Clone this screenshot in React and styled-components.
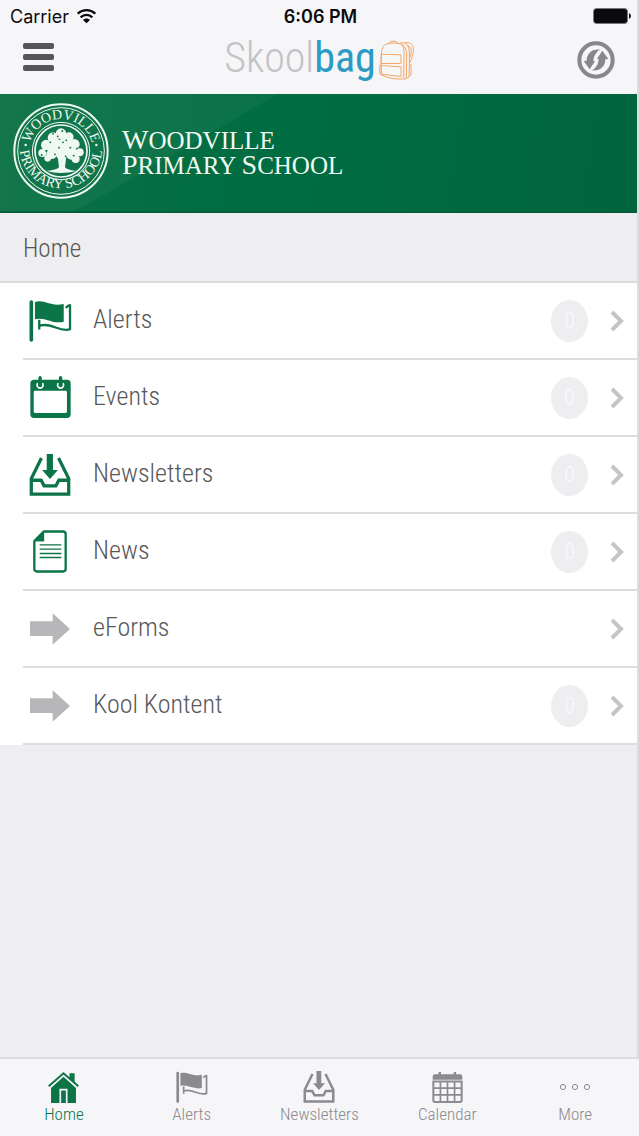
import React from "react";
import styled, { createGlobalStyle } from "styled-components";

const condensed = `"Roboto Condensed", "Liberation Sans Narrow", Roboto, sans-serif`;

const GlobalStyle = createGlobalStyle`
  *, *::before, *::after { box-sizing: border-box; }
  body { margin: 0; background: #eeedef; font-family: ${condensed}; font-weight: 300; }
  button { font: inherit; color: inherit; background: none; border: 0; padding: 0; cursor: pointer; }
  a { color: inherit; text-decoration: none; }
  h1, h2, p { margin: 0; font-weight: inherit; }
  ul { list-style: none; margin: 0; padding: 0; }
  svg { display: block; flex: none; }
`;

const Screen = styled.div`
  display: flex;
  flex-direction: column;
  min-height: 100vh;
  background: #f6f5f8;
`;

const Content = styled.div`
  flex: 1;
  display: flex;
  flex-direction: column;
  border-right: 2px solid #dddde0;
`;

const StatusBar = styled.div`
  display: grid;
  grid-template-columns: 1fr auto 1fr;
  align-items: center;
  height: 32px;
  padding: 0 6px 0 10px;
  font-family: Inter, sans-serif;
  font-size: 18px;
  font-weight: 400;
  color: #0b0b0d;
`;

const Carrier = styled.span`
  display: flex;
  align-items: center;
  gap: 8px;
`;

const Clock = styled.time`
  font-weight: 600;
`;

const Battery = styled.span`
  justify-self: end;
`;

const NavBar = styled.header`
  display: grid;
  grid-template-columns: 1fr auto 1fr;
  align-items: center;
  height: 62px;
  padding: 0 22px 6px 23px;
`;

const IconButton = styled.button`
  justify-self: ${(p) => p.$side};
`;

const MenuButton = styled(IconButton)`
  padding-bottom: 6px;
`;

const Brand = styled.div`
  display: flex;
  align-items: center;
  gap: 3px;
`;

const BrandName = styled.h1`
  font-size: 42px;
  line-height: 48px;
  padding-bottom: 4px;
  font-weight: 300;
  color: #c3c2c5;
`;

const BrandAccent = styled.span`
  font-weight: 400;
  color: #2a9cc4;
`;

const Banner = styled.section`
  display: flex;
  align-items: center;
  gap: 13px;
  height: 119px;
  padding: 0 13px 4px;
  border-bottom: 2px solid #005f39;
  background:
    linear-gradient(150deg, rgba(255, 255, 255, 0.04) 0 138px, transparent 140px),
    linear-gradient(100deg, #0a7144 0%, #006c41 45%, #00653f 100%);
`;

const SchoolName = styled.p`
  padding-top: 4px;
  font-family: "Liberation Serif", serif;
  font-size: 25px;
  line-height: 24px;
  font-weight: 400;
  color: #f1faf4;
`;

const NameLine = styled.span`
  display: block;
`;

const Initial = styled.span`
  font-size: 28px;
`;

const PageTitle = styled.h2`
  height: 70px;
  padding: 0 23px;
  border-bottom: 2px solid #dcdbdf;
  background: #eeedef;
  font-size: 25px;
  line-height: 72px;
  color: #58575a;
`;

const Menu = styled.ul`
  background: #fff;
`;

const MenuItem = styled.li`
  padding-left: 23px;
`;

const MenuLink = styled.a`
  display: flex;
  align-items: center;
  height: 77px;
  padding-right: 13px;
  border-bottom: 2px solid #dddce0;
`;

const MenuIcon = styled.span`
  display: flex;
  justify-content: center;
  width: 54px;
  margin-right: 16px;
  color: ${(p) => (p.$muted ? "#b7b6b8" : "#0b7548")};
`;

const MenuLabel = styled.span`
  flex: 1;
  padding-bottom: 4px;
  font-size: 26px;
  line-height: 32px;
  color: #58575a;
`;

const Badge = styled.span`
  width: 37px;
  height: 42px;
  margin-right: 22px;
  border-radius: 50%;
  background: #eeedef;
  font-size: 22px;
  line-height: 42px;
  text-align: center;
  color: #fbfafc;
`;

const Filler = styled.div`
  flex: 1;
  background: #eeedef;
`;

const TabBar = styled.nav`
  display: grid;
  grid-template-columns: repeat(5, 1fr);
  height: 79px;
  border-top: 2px solid #dddce0;
  background: #f6f5f8;
`;

const Tab = styled.a`
  display: flex;
  flex-direction: column;
  align-items: center;
  padding-top: 12px;
  font-size: 17px;
  line-height: 22px;
  color: ${(p) => (p.$active ? "#0b7548" : "#8b8a8d")};
`;

const TabIcon = styled.span`
  display: flex;
  align-items: center;
  height: 32px;
`;

const Flag = ({ size = 43 }) => (
  <svg width={size} height={size} viewBox="0 0 130 130" fill="none" stroke="currentColor">
    <path d="M7 9V124" strokeWidth="11" strokeLinecap="round" />
    <path d="M18 9C48 0 62 24 105 15V69C70 77 50 53 18 61Z" fill="currentColor" stroke="none" />
    <path d="M111 27Q120 18 124 19V91C95 103 65 68 31 81M31 63V92" strokeWidth="7" />
  </svg>
);

const EventsIcon = () => (
  <svg width="41" height="43" viewBox="0 0 122 128">
    <path
      fill="currentColor"
      fillRule="evenodd"
      d="M12 11H110Q121 11 121 22V114Q121 125 110 125H12Q1 125 1 114V22Q1 11 12 11ZM15 44Q11 44 11 48V106Q11 110 15 110H106Q110 110 110 106V48Q110 44 106 44Z"
    />
    <g fill="none" strokeLinecap="round">
      <path d="M22 23a9 9 0 1 0 16 0M83 23a9 9 0 1 0 16 0" stroke="#fff" strokeWidth="5" />
      <path d="M30 5V22M91 5V22" stroke="currentColor" strokeWidth="10" />
    </g>
  </svg>
);

const Inbox = ({ size = 42 }) => (
  <svg width={size} height={size} viewBox="0 0 126 128" fill="none" stroke="currentColor" strokeWidth="10">
    <path d="M37 12L6 75V122H120V75L89 12" />
    <path d="M6 80H36L45 97H81L90 80H120" />
    <path d="M53 0H72V49H87L63 76L39 49H53Z" fill="currentColor" stroke="none" />
  </svg>
);

const NewsIcon = () => (
  <svg width="34" height="43" viewBox="0 0 102 128" fill="none" stroke="currentColor">
    <path d="M32 4H90Q98 4 98 12V116Q98 124 90 124H12Q4 124 4 116V33Z" strokeWidth="7" strokeLinejoin="round" />
    <path d="M33 3V33H3Z" fill="currentColor" />
    <path d="M20 44H85M20 57H85M20 70H85M20 82H85" strokeWidth="4" />
  </svg>
);

const ArrowIcon = () => (
  <svg width="40" height="32" viewBox="0 0 120 94">
    <path d="M0 24H68V0L120 47L68 94V68H0Z" fill="currentColor" />
  </svg>
);

const Chevron = () => (
  <svg width="14" height="22" viewBox="0 0 14 22" fill="none" stroke="#c5c4c8" strokeWidth="4">
    <path d="M2 2L11 11L2 20" />
  </svg>
);

const HouseIcon = () => (
  <svg width="31" height="31" viewBox="0 0 90 92" fill="currentColor">
    <path d="M63 4H78V34L63 22Z" />
    <path d="M8 92V47L45 14L82 47V92H57V50H33V92Z" />
    <path d="M38 55H52V92H38Z" />
    <path d="M27 92V45H61V92" fill="none" stroke="currentColor" strokeWidth="5" />
    <path d="M5 47L45 10L85 47" fill="none" stroke="#f6f5f8" strokeWidth="4" />
    <path d="M1 42L45 4L89 42" fill="none" stroke="currentColor" strokeWidth="6" />
  </svg>
);

const CalendarIcon = () => (
  <svg width="31" height="31" viewBox="0 0 90 92" fill="none" stroke="currentColor">
    <path d="M1 23V14Q1 7 8 7H82Q89 7 89 14V23Z" fill="currentColor" stroke="none" />
    <path d="M22 0V12M67 0V12" strokeWidth="7" />
    <path d="M3 28H87V84Q87 89 82 89H8Q3 89 3 84Z" strokeWidth="6" />
    <path d="M24 28V88M45 28V88M66 28V88M3 48H87M3 68H87" strokeWidth="5" />
  </svg>
);

const MoreIcon = () => (
  <svg width="32" height="8" viewBox="0 0 32 8" fill="none" stroke="currentColor">
    <circle cx="4" cy="4" r="2.6" />
    <circle cx="16" cy="4" r="2.6" />
    <circle cx="28" cy="4" r="2.6" />
  </svg>
);

const WifiIcon = () => (
  <svg width="19" height="15" viewBox="0 0 57 45" fill="none" stroke="currentColor" strokeWidth="7">
    <path d="M2 14C18 0 39 0 55 14" />
    <path d="M11 25C21 15 36 15 46 25" />
    <path d="M28.5 43L18 33C24 27 33 27 39 33Z" fill="currentColor" stroke="none" />
  </svg>
);

const BatteryIcon = () => (
  <svg width="38" height="16" viewBox="0 0 38 16">
    <rect x="0.5" y="0.5" width="34" height="15" rx="3" fill="#0b0b0d" stroke="#77767a" />
    <path d="M36 5Q38 6 38 8T36 11Z" fill="#0b0b0d" />
  </svg>
);

const HamburgerIcon = () => (
  <svg width="31" height="30" viewBox="0 0 31 30" fill="#565558">
    <rect width="31" height="6" y="1" rx="2" />
    <rect width="31" height="6" y="12" rx="2" />
    <rect width="31" height="6" y="23" rx="2" />
  </svg>
);

const swirl = "M-37 3L-28 2C-28 -20 -11 -35 14 -31C3 -26 -7 -16 -8 3L-3 4L-19 28Z";

const RefreshIcon = () => (
  <svg width="38" height="38" viewBox="-57 -57 114 114" fill="#88878a">
    <circle r="50" fill="none" stroke="#88878a" strokeWidth="12" />
    <path d={swirl} />
    <path d={swirl} transform="rotate(180)" />
    <path d="M11 -29C-6 -18 9 12 -11 29" fill="none" stroke="#f6f5f8" strokeWidth="4" />
  </svg>
);

const BackpackIcon = () => (
  <svg width="35" height="41" viewBox="0 0 105 122" fill="none" stroke="#f3a868" strokeWidth="3" strokeLinejoin="round">
    <path d="M7 42Q7 16 24 11Q45 5 63 11Q76 15 75 40L74 116Q40 120 6 104Z" />
    <path d="M30 9Q35 1 44 3Q54 2 58 10" />
    <path d="M62 8Q84 6 89 20Q93 40 90 110L74 119" />
    <path d="M68 12Q82 20 83 42L82 114" />
    <path d="M78 8Q100 4 103 24Q105 42 92 68M84 17Q97 18 97 34Q97 44 91 54" />
    <path d="M7 42L66 44V70L6 70ZM7 76L66 80V109L7 102Z" />
    <path d="M6 72L1 76V98L6 103M90 70L96 74V104L90 110" />
  </svg>
);

const foliage = [
  [0, -26, 8], [-12, -20, 8], [12, -21, 7], [-22, -9, 8], [-9, -9, 10],
  [6, -9, 11], [20, -10, 8], [-28, 3, 6], [-14, 4, 8], [1, 4, 9],
  [16, 4, 9], [28, 2, 6], [-20, 11, 5], [22, 12, 6],
];

const gaps = [
  [-5, -22], [8, -16], [-16, -13], [-3, -5], [14, -5], [-22, 0], [24, -4],
  [-9, 5], [7, 8], [19, 7], [2, -30], [-29, 6], [-12, -26], [3, -13],
];

const Seal = () => (
  <svg width="96" height="96" viewBox="-72 -72 144 144" fill="none" stroke="#eff9f2" role="img" aria-label="School seal">
    <defs>
      <path id="sealTop" d="M-48 0A48 48 0 0 1 48 0" />
      <path id="sealBottom" d="M-62 -6A62 62 0 0 0 62 -6" />
    </defs>
    <circle r="70" strokeWidth="3" />
    <circle r="65" strokeWidth="1.5" />
    <circle r="43" strokeWidth="1.5" />
    <circle r="39" strokeWidth="2.5" />
    <g fill="#eff9f2" stroke="none">
      <g fontFamily="Liberation Serif, serif" fontSize="21" fontWeight="400" textAnchor="middle">
        <text><textPath href="#sealTop" startOffset="50%">WOODVILLE</textPath></text>
        <text><textPath href="#sealBottom" startOffset="50%">PRIMARY SCHOOL</textPath></text>
      </g>
      <circle cx="-53" cy="-9" r="1.8" />
      <circle cx="53" cy="-9" r="1.8" />
      {foliage.map(([x, y, r]) => <circle key={`${x},${y}`} cx={x} cy={y} r={r} />)}
      <path d="M-5 8L-3 24Q-4 28 -22 30Q0 36 23 30Q7 28 6 24L8 8Z" />
    </g>
    <g fill="#0d7546" stroke="none">
      {gaps.map(([x, y]) => <circle key={`${x},${y}`} cx={x} cy={y} r="1.4" />)}
    </g>
  </svg>
);

const items = [
  { label: "Alerts", icon: <Flag />, count: 0 },
  { label: "Events", icon: <EventsIcon />, count: 0 },
  { label: "Newsletters", icon: <Inbox />, count: 0 },
  { label: "News", icon: <NewsIcon />, count: 0 },
  { label: "eForms", icon: <ArrowIcon />, muted: true },
  { label: "Kool Kontent", icon: <ArrowIcon />, muted: true, count: 0 },
];

const tabs = [
  { label: "Home", icon: <HouseIcon />, active: true },
  { label: "Alerts", icon: <Flag size={32} /> },
  { label: "Newsletters", icon: <Inbox size={32} /> },
  { label: "Calendar", icon: <CalendarIcon /> },
  { label: "More", icon: <MoreIcon /> },
];

export default function App() {
  return (
    <Screen>
      <GlobalStyle />
      <Content>
        <StatusBar>
          <Carrier>Carrier <WifiIcon /></Carrier>
          <Clock>6:06 PM</Clock>
          <Battery><BatteryIcon /></Battery>
        </StatusBar>
        <NavBar>
          <MenuButton $side="start" aria-label="Menu"><HamburgerIcon /></MenuButton>
          <Brand>
            <BrandName>Skool<BrandAccent>bag</BrandAccent></BrandName>
            <BackpackIcon />
          </Brand>
          <IconButton $side="end" aria-label="Refresh"><RefreshIcon /></IconButton>
        </NavBar>
        <Banner>
          <Seal />
          <SchoolName>
            <NameLine><Initial>W</Initial>OODVILLE</NameLine>
            <NameLine><Initial>P</Initial>RIMARY <Initial>S</Initial>CHOOL</NameLine>
          </SchoolName>
        </Banner>
        <PageTitle>Home</PageTitle>
        <Menu>
          {items.map(({ label, icon, muted, count }) => (
            <MenuItem key={label}>
              <MenuLink href={`#${label}`}>
                <MenuIcon $muted={muted}>{icon}</MenuIcon>
                <MenuLabel>{label}</MenuLabel>
                {count !== undefined && <Badge>{count}</Badge>}
                <Chevron />
              </MenuLink>
            </MenuItem>
          ))}
        </Menu>
        <Filler />
      </Content>
      <TabBar>
        {tabs.map(({ label, icon, active }) => (
          <Tab key={label} href={`#tab-${label}`} $active={active} aria-current={active ? "page" : undefined}>
            <TabIcon>{icon}</TabIcon>
            {label}
          </Tab>
        ))}
      </TabBar>
    </Screen>
  );
}
